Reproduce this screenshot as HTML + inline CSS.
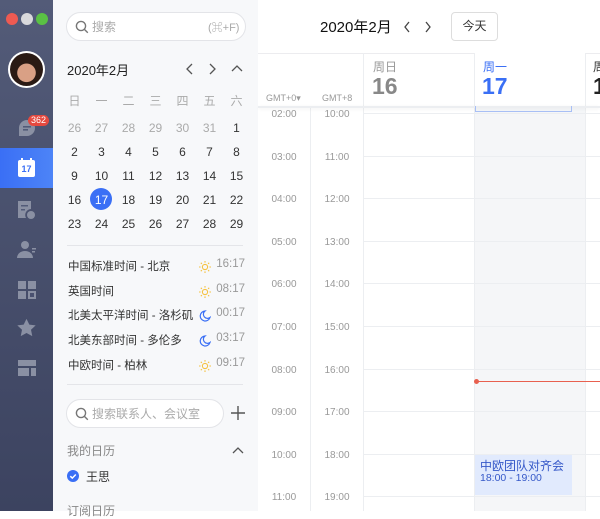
<!DOCTYPE html>
<html><head><meta charset="utf-8"><style>
*{margin:0;padding:0;box-sizing:border-box}
body{width:600px;height:511px;overflow:hidden;position:relative;font-family:"Liberation Sans","Noto Sans CJK SC",sans-serif;background:#fff}
.a{position:absolute}
.side{left:0;top:0;width:53px;height:511px;background:linear-gradient(#535b78,#3c4360)}
.panel{left:53px;top:0;width:205px;height:511px;background:#f7f8fa}
.t{position:absolute;white-space:nowrap}
.d{position:absolute;width:27px;text-align:center;font-size:12px;color:#333;line-height:14px}
.g{color:#aaa}
.tz{position:absolute;left:68px;font-size:11.5px;color:#333}
.tt{position:absolute;left:200px;font-size:11.5px;color:#999;width:45px;text-align:right}
.ic{position:absolute;left:199px}
.hl{position:absolute;left:363px;width:237px;height:1px;background:#eceef1}
.lab{position:absolute;font-size:10px;color:#999;width:50px;text-align:center}
</style></head><body>
<div class="a side"></div>
<div class="a" style="left:6px;top:13px;width:12px;height:12px;border-radius:50%;background:#ee5a52"></div>
<div class="a" style="left:21px;top:13px;width:12px;height:12px;border-radius:50%;background:#d9d9dc"></div>
<div class="a" style="left:36px;top:13px;width:12px;height:12px;border-radius:50%;background:#5ac144"></div>
<div class="a" style="left:8px;top:51px;width:37px;height:37px;border-radius:50%;background:#fff"></div>
<div class="a" style="left:10px;top:53px;width:33px;height:33px;border-radius:50%;background:radial-gradient(circle at 50% 60%,#d9a085 0 35%,#2a1a14 37%)"></div>
<svg class="a" style="left:17px;top:118px" width="20" height="20" viewBox="0 0 20 20"><path d="M10 2a8 8 0 0 0-8 8v8h8a8 8 0 0 0 0-16z" fill="#8a90a3"/><rect x="6" y="8" width="8" height="1.6" fill="#535b78"/><rect x="6" y="11" width="5" height="1.6" fill="#535b78"/></svg>
<div class="a" style="left:28px;top:115px;width:21px;height:11px;border-radius:6px;background:#e5493f;color:#fff;font-size:9px;line-height:11px;text-align:center">362</div>
<div class="a" style="left:0;top:148px;width:53px;height:40px;background:linear-gradient(90deg,#3a6ff5,#4d84f7)"></div>
<div class="a" style="left:18px;top:160px;width:17px;height:17px;background:#fff;border-radius:2px;color:#3a6ff5;font-size:9px;font-weight:bold;text-align:center;line-height:19px">17</div>
<div class="a" style="left:21px;top:158px;width:2px;height:4px;background:#fff"></div><div class="a" style="left:30px;top:158px;width:2px;height:4px;background:#fff"></div>
<svg class="a" style="left:17px;top:200px" width="20" height="20" viewBox="0 0 20 20" fill="#8a90a3"><path d="M1 1h13v8a6 6 0 0 0-5 9H1z"/><circle cx="14" cy="15" r="4"/><rect x="4" y="5" width="7" height="1.5" fill="#535b78"/><rect x="4" y="9" width="4" height="1.5" fill="#535b78"/></svg>
<svg class="a" style="left:17px;top:240px" width="20" height="20" viewBox="0 0 20 20" fill="#8a90a3"><circle cx="8" cy="5" r="4"/><path d="M0 18a8 7 0 0 1 16 0z"/><rect x="15" y="8" width="4" height="1.5"/><rect x="15" y="11" width="3" height="1.5"/></svg>
<svg class="a" style="left:17px;top:280px" width="20" height="20" viewBox="0 0 20 20" fill="#8a90a3"><rect x="1" y="1" width="8" height="8"/><rect x="11" y="1" width="8" height="8"/><rect x="1" y="11" width="8" height="8"/><rect x="11" y="11" width="8" height="8"/><rect x="13" y="13" width="4" height="4" fill="#4a5170"/></svg>
<svg class="a" style="left:16px;top:318px" width="21" height="20" viewBox="0 0 24 24" fill="#8a90a3"><path d="M12 1l3.4 7 7.6.9-5.6 5.2 1.5 7.6L12 18l-6.9 3.7 1.5-7.6L1 8.9 8.6 8z"/></svg>
<svg class="a" style="left:17px;top:359px" width="20" height="18" viewBox="0 0 20 18" fill="#8a90a3"><rect x="1" y="1" width="18" height="6"/><rect x="1" y="9" width="11" height="8"/><rect x="14" y="9" width="5" height="8"/></svg>

<div class="a panel"></div>
<div class="a" style="left:66px;top:12px;width:180px;height:29px;border:1px solid #e3e4e8;border-radius:15px;background:#fff"></div>
<svg class="a" style="left:75px;top:20px" width="14" height="14" viewBox="0 0 14 14" fill="none" stroke="#777" stroke-width="1.4"><circle cx="6" cy="6" r="4.6"/><path d="M9.4 9.4l3.4 3.4"/></svg>
<div class="t" style="left:92px;top:18px;font-size:12px;color:#aaa">搜索</div>
<div class="t" style="left:208px;top:19px;font-size:11px;color:#aaa">(⌘+F)</div>
<div class="t" style="left:67px;top:60px;font-size:13px;color:#222">2020年2月</div>
<svg class="a" style="left:184px;top:63px" width="64" height="12" viewBox="0 0 64 12" fill="none" stroke="#555" stroke-width="1.3"><path d="M8 1L3 6l5 5M26 1l5 5-5 5M48 8l5-5 5 5"/></svg>
<div class="d g" style="left:61px;top:94px">日</div><div class="d g" style="left:88px;top:94px">一</div><div class="d g" style="left:115px;top:94px">二</div><div class="d g" style="left:142px;top:94px">三</div><div class="d g" style="left:169px;top:94px">四</div><div class="d g" style="left:196px;top:94px">五</div><div class="d g" style="left:223px;top:94px">六</div>
<div class="a" style="left:90px;top:188px;width:22px;height:22px;border-radius:50%;background:#3a6ff5"></div>
<div id="cal"></div>
<div class="a" style="left:67px;top:245px;width:176px;height:1px;background:#e4e5e9"></div>
<div class="tz" style="top:258px">中国标准时间 - 北京</div><div class="tt" style="top:258px">16:17</div>
<div class="tz" style="top:283px">英国时间</div><div class="tt" style="top:283px">08:17</div>
<div class="tz" style="top:307px">北美太平洋时间 - 洛杉矶</div><div class="tt" style="top:307px">00:17</div>
<div class="tz" style="top:332px">北美东部时间 - 多伦多</div><div class="tt" style="top:332px">03:17</div>
<div class="tz" style="top:357px">中欧时间 - 柏林</div><div class="tt" style="top:357px">09:17</div>
<div id="icons"></div>
<div class="a" style="left:67px;top:384px;width:176px;height:1px;background:#e4e5e9"></div>
<div class="a" style="left:66px;top:399px;width:158px;height:29px;border:1px solid #e3e4e8;border-radius:15px;background:#fff"></div>
<svg class="a" style="left:75px;top:407px" width="14" height="14" viewBox="0 0 14 14" fill="none" stroke="#777" stroke-width="1.4"><circle cx="6" cy="6" r="4.6"/><path d="M9.4 9.4l3.4 3.4"/></svg>
<div class="t" style="left:92px;top:405px;font-size:12px;color:#aaa">搜索联系人、会议室</div>
<svg class="a" style="left:231px;top:406px" width="14" height="14" viewBox="0 0 14 14" stroke="#555" stroke-width="1.4"><path d="M7 0v14M0 7h14"/></svg>
<div class="t" style="left:67px;top:442px;font-size:12px;color:#888">我的日历</div>
<svg class="a" style="left:232px;top:446px" width="12" height="8" viewBox="0 0 12 8" fill="none" stroke="#555" stroke-width="1.3"><path d="M1 7l5-5 5 5"/></svg>
<div class="a" style="left:67px;top:470px;width:12px;height:12px;border-radius:50%;background:#3a6ff5"></div>
<svg class="a" style="left:67px;top:470px" width="12" height="12" viewBox="0 0 12 12" fill="none" stroke="#fff" stroke-width="1.5"><path d="M3.3 6.2l2 1.9 3.5-3.6"/></svg>
<div class="t" style="left:86px;top:468px;font-size:12px;color:#333">王思</div>
<div class="t" style="left:67px;top:502px;font-size:12px;color:#888">订阅日历</div>

<div class="t" style="left:320px;top:16px;font-size:15px;color:#111">2020年2月</div>
<svg class="a" style="left:403px;top:21px" width="32" height="12" viewBox="0 0 32 12" fill="none" stroke="#444" stroke-width="1.3"><path d="M6 1L2 6l4 5M23 1l4 5-4 5"/></svg>
<div class="a" style="left:451px;top:12px;width:47px;height:29px;border:1px solid #ddd;border-radius:4px;text-align:center;line-height:27px;font-size:12px;color:#333">今天</div>
<div class="a" style="left:258px;top:53px;width:342px;height:1px;background:#ececef"></div>
<div class="a" style="left:474px;top:107px;width:111px;height:404px;background:#f5f6f8"></div>
<div class="a" style="left:474px;top:53px;width:111px;height:54px;background:#fff"></div>
<div class="a" style="left:363px;top:53px;width:1px;height:458px;background:#eceef1"></div>
<div class="a" style="left:474px;top:53px;width:1px;height:458px;background:#eceef1"></div>
<div class="a" style="left:585px;top:53px;width:1px;height:458px;background:#eceef1"></div>
<div class="a" style="left:310px;top:107px;width:1px;height:404px;background:#eceef1"></div>
<div class="a" style="left:258px;top:106px;width:342px;height:2px;background:#eceef1;box-shadow:0 1px 3px rgba(0,0,0,.06)"></div>
<div class="a" style="left:475px;top:106px;width:97px;height:6px;border:1px solid #a8bff5;border-top:none"></div>
<div class="t" style="left:373px;top:58px;font-size:12px;color:#999">周日</div>
<div class="t" style="left:372px;top:73px;font-size:23px;color:#888;font-weight:bold">16</div>
<div class="t" style="left:483px;top:58px;font-size:12px;color:#3a6ff5">周一</div>
<div class="t" style="left:482px;top:73px;font-size:23px;color:#3a6ff5;font-weight:bold">17</div>
<div class="t" style="left:593px;top:58px;font-size:12px;color:#333">周</div>
<div class="t" style="left:593px;top:73px;font-size:23px;color:#222;font-weight:bold">1</div>
<div class="t" style="left:266px;top:93px;font-size:9px;color:#999">GMT+0▾</div>
<div class="t" style="left:322px;top:93px;font-size:9px;color:#999">GMT+8</div>
<div id="grid"></div>
<div class="a" style="left:476px;top:381px;width:124px;height:1px;background:#e8604f"></div>
<div class="a" style="left:474px;top:379px;width:5px;height:5px;border-radius:50%;background:#e8604f"></div>
<div class="a" style="left:475px;top:455px;width:97px;height:40px;background:#e1eafd"></div>
<div class="t" style="left:480px;top:457px;font-size:12px;color:#3558c8">中欧团队对齐会</div>
<div class="t" style="left:480px;top:472px;font-size:10.5px;color:#3558c8">18:00 - 19:00</div>
<script>
var h='',rows=[[26,27,28,29,30,31,1],[2,3,4,5,6,7,8],[9,10,11,12,13,14,15],[16,17,18,19,20,21,22],[23,24,25,26,27,28,29]];
rows.forEach(function(r,i){r.forEach(function(v,j){var c=(i==0&&j<6)?'color:#aaa':(i==3&&j==1?'color:#fff':'');h+='<div class="d" style="left:'+(61+27*j)+'px;top:'+(121+24*i)+'px;'+c+'">'+v+'</div>'})});
document.getElementById('cal').innerHTML=h;
var sun='<svg width="12" height="12" viewBox="0 0 12 12" fill="none" stroke="#f5c242" stroke-width="1.1"><circle cx="6" cy="6" r="2.6"/><path d="M6 0v1.6M6 10.4V12M0 6h1.6M10.4 6H12M1.8 1.8l1.1 1.1M9.1 9.1l1.1 1.1M1.8 10.2l1.1-1.1M9.1 2.9l1.1-1.1"/></svg>';
var moon='<svg width="12" height="12" viewBox="0 0 12 12" fill="none" stroke="#3a6ff5" stroke-width="1.2"><path d="M6 1a5 5 0 1 0 5 6.5A4 4 0 0 1 6 1z"/></svg>';
var ic='',ys=[260,285,309,334,359],k2=[sun,sun,moon,moon,sun];
ys.forEach(function(y,i){ic+='<div class="ic" style="top:'+y+'px">'+k2[i]+'</div>'});
document.getElementById('icons').innerHTML=ic;
var g='';for(var k=0;k<10;k++){var y=113+42.6*k;g+='<div class="hl" style="top:'+Math.round(y)+'px"></div>';var a=('0'+(2+k)).slice(-2)+':00',b=(10+k)+':00';g+='<div class="lab" style="left:259px;top:'+Math.round(y-4)+'px">'+a+'</div><div class="lab" style="left:312px;top:'+Math.round(y-4)+'px">'+b+'</div>'}
document.getElementById('grid').innerHTML=g;
</script>
</body></html>
